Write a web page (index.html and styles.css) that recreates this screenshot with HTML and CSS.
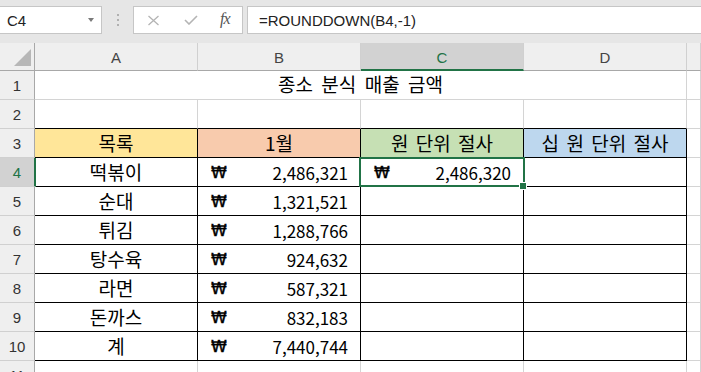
FILE: index.html
```html
<!DOCTYPE html>
<html lang="ko">
<head>
<meta charset="utf-8">
<title>ROUNDDOWN</title>
<link rel="stylesheet" href="styles.css">
</head>
<body>
<div class="toolbar">
  <div class="namebox"><span class="ref">C4</span><span class="caret"></span></div>
  <div class="grip"><i></i><i></i><i></i></div>
  <div class="fxbox">
    <svg class="ico" width="13" height="11" viewBox="0 0 13 11"><path d="M1.5 1 L11.5 10 M11.5 1 L1.5 10" stroke="#b4b4b4" stroke-width="1.3" fill="none"/></svg>
    <svg class="ico" width="14" height="10" viewBox="0 0 14 10"><path d="M1 5 L5 9 L13 1" stroke="#b4b4b4" stroke-width="1.6" fill="none"/></svg>
    <span class="fx">fx</span>
  </div>
  <div class="formula">=ROUNDDOWN(B4,-1)</div>
</div>
<div class="sheet">
  <div class="hd corner"><span class="tri"></span></div>
  <div class="hd">A</div>
  <div class="hd">B</div>
  <div class="hd hd-sel">C</div>
  <div class="hd">D</div>
  <div class="hd"></div>

  <div class="rh">1</div>
  <div class="c title">종소 분식 매출 금액</div>
  <div class="c"></div>

  <div class="rh">2</div>
  <div class="c top"></div><div class="c top"></div><div class="c top"></div><div class="c top"></div>
  <div class="c"></div>

  <div class="rh">3</div>
  <div class="c t ctr y">목록</div>
  <div class="c t ctr o">1월</div>
  <div class="c t ctr g">원 단위 절사</div>
  <div class="c t ctr b">십 원 단위 절사</div>
  <div class="c"></div>

  <div class="rh rh-sel">4</div>
  <div class="c t ctr">떡볶이</div>
  <div class="c t acc"><span class="won">₩</span><span>2,486,321</span></div>
  <div class="c t acc sel"><span class="won">₩</span><span>2,486,320</span></div>
  <div class="c t"></div>
  <div class="c"></div>

  <div class="rh">5</div>
  <div class="c t ctr">순대</div>
  <div class="c t acc"><span class="won">₩</span><span>1,321,521</span></div>
  <div class="c t"></div><div class="c t"></div>
  <div class="c"></div>

  <div class="rh">6</div>
  <div class="c t ctr">튀김</div>
  <div class="c t acc"><span class="won">₩</span><span>1,288,766</span></div>
  <div class="c t"></div><div class="c t"></div>
  <div class="c"></div>

  <div class="rh">7</div>
  <div class="c t ctr">탕수육</div>
  <div class="c t acc"><span class="won">₩</span><span>924,632</span></div>
  <div class="c t"></div><div class="c t"></div>
  <div class="c"></div>

  <div class="rh">8</div>
  <div class="c t ctr">라면</div>
  <div class="c t acc"><span class="won">₩</span><span>587,321</span></div>
  <div class="c t"></div><div class="c t"></div>
  <div class="c"></div>

  <div class="rh">9</div>
  <div class="c t ctr">돈까스</div>
  <div class="c t acc"><span class="won">₩</span><span>832,183</span></div>
  <div class="c t"></div><div class="c t"></div>
  <div class="c"></div>

  <div class="rh">10</div>
  <div class="c t ctr">계</div>
  <div class="c t acc"><span class="won">₩</span><span>7,440,744</span></div>
  <div class="c t"></div><div class="c t"></div>
  <div class="c"></div>

  <div class="rh">11</div>
  <div class="c"></div><div class="c"></div><div class="c"></div><div class="c"></div><div class="c"></div>
</div>
</body>
</html>
```
FILE: styles.css
```css
html, body {
  margin: 0;
  padding: 0;
  background: #ffffff;
  overflow: hidden;
  width: 701px;
  height: 372px;
}
body {
  font-family: "Noto Sans CJK KR", "Noto Sans", sans-serif;
  color: #000;
}
.toolbar {
  height: 43px;
  box-sizing: border-box;
  background: #e6e6e6;
  display: flex;
  align-items: flex-start;
  padding-top: 6px;
}
.namebox {
  box-sizing: border-box;
  margin-left: -1px;
  width: 103px;
  height: 28px;
  background: #fff;
  border: 1px solid #c6c6c6;
  display: flex;
  align-items: center;
  justify-content: space-between;
  padding: 0 7px 0 7px;
  font-family: "Liberation Sans", Arial, sans-serif;
  font-size: 15px;
  color: #222;
}
.caret {
  width: 0;
  height: 0;
  border-left: 3.5px solid transparent;
  border-right: 3.5px solid transparent;
  border-top: 4px solid #7a7a7a;
  margin-top: -1px;
}
.grip {
  width: 31px;
  height: 28px;
  display: flex;
  flex-direction: column;
  align-items: center;
  justify-content: center;
  gap: 3px;
}
.grip i {
  display: block;
  width: 2px;
  height: 2px;
  background: #b0b0b0;
}
.fxbox {
  box-sizing: border-box;
  width: 110px;
  height: 28px;
  background: #fff;
  border: 1px solid #c6c6c6;
  display: flex;
  align-items: center;
  padding-left: 13px;
}
.fxbox .ico:first-child { margin-right: 24px; }
.fxbox .ico:nth-child(2) { margin-right: 22px; }
.fx {
  font-family: "Liberation Serif", "Times New Roman", serif;
  font-style: italic;
  font-size: 16px;
  color: #555;
  letter-spacing: -1px;
  margin-top: -2px;
}
.formula {
  box-sizing: border-box;
  margin-left: 4px;
  flex: 1;
  height: 28px;
  background: #fff;
  border: 1px solid #c6c6c6;
  border-right: none;
  display: flex;
  align-items: center;
  padding-left: 11px;
  font-family: "Liberation Sans", Arial, sans-serif;
  font-size: 15px;
  color: #222;
}
.sheet {
  display: grid;
  grid-template-columns: 35px 163px 163px 163px 163px 1fr;
  grid-template-rows: 28px;
  grid-auto-rows: 29px;
}
.sheet > div {
  box-sizing: border-box;
  min-width: 0;
}
.hd {
  background: #efefef;
  border-right: 1px solid #d0d0d0;
  border-bottom: 1px solid #a8a8a8;
  display: flex;
  align-items: center;
  justify-content: center;
  font-family: "Liberation Sans", Arial, sans-serif;
  font-size: 15px;
  color: #444;
  padding-top: 2px;
}
.corner {
  position: relative;
  border-right: 1px solid #a8a8a8;
}
.tri {
  position: absolute;
  right: 3px;
  bottom: 4px;
  width: 17px;
  height: 17px;
  background: #b7b7b7;
  clip-path: polygon(100% 0, 100% 100%, 0 100%);
}
.hd-sel {
  background: #d2d2d2;
  border-bottom: 2px solid #217346;
  color: #217346;
}
.rh {
  background: #efefef;
  border-right: 1px solid #a8a8a8;
  border-bottom: 1px solid #d0d0d0;
  display: flex;
  align-items: center;
  justify-content: center;
  font-family: "Liberation Sans", Arial, sans-serif;
  font-size: 15px;
  color: #333;
}
.rh-sel {
  background: #d2d2d2;
  color: #217346;
  border-right: 2px solid #217346;
  margin-right: -1px;
  width: 36px;
  position: relative;
}
.c {
  border-right: 1px solid #d4d4d4;
  border-bottom: 1px solid #d4d4d4;
  font-size: 17px;
  display: flex;
  align-items: center;
  white-space: nowrap;
}
.title {
  grid-column: span 4;
  justify-content: center;
  font-size: 19px;
  word-spacing: 3px;
  padding-bottom: 3px;
}
.c.top {
  border-bottom-color: #000;
}
.c.t {
  border-right-color: #000;
  border-bottom-color: #000;
}
.ctr {
  justify-content: center;
  font-size: 19px;
  word-spacing: 2px;
  padding-bottom: 1px;
}
.acc {
  justify-content: space-between;
  padding: 0 12px 0 13px;
}
.won {
  font-family: "DejaVu Sans", sans-serif;
  font-size: 16px;
  -webkit-text-stroke: 0.4px #000;
}
.y { background: #ffe699; }
.o { background: #f8cbad; }
.g { background: #c6e0b4; }
.b { background: #bdd7ee; }
.sel {
  position: relative;
}
.sel::before {
  content: "";
  position: absolute;
  left: -2px;
  top: -1px;
  right: -2px;
  bottom: -1px;
  border: 2px solid #217346;
}
.sel::after {
  content: "";
  position: absolute;
  right: -4px;
  bottom: -4px;
  width: 6px;
  height: 6px;
  background: #217346;
  border: 1px solid #fff;
}
```
